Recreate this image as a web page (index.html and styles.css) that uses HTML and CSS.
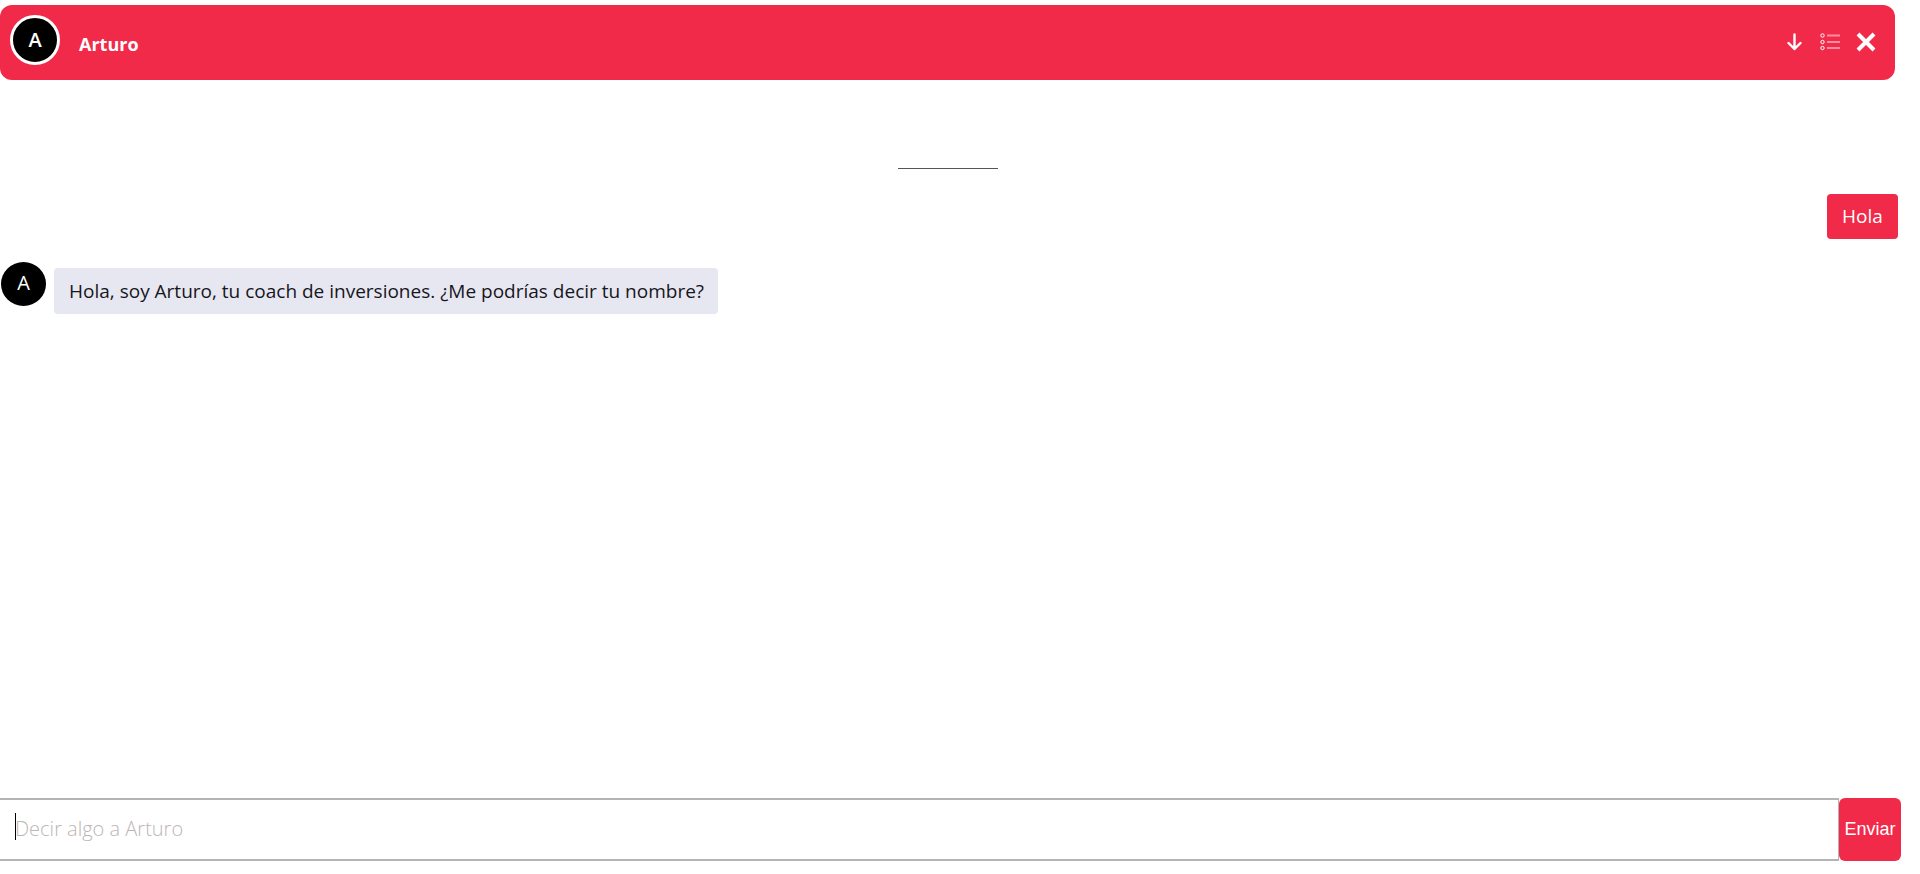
FILE: index.html
```html
<!DOCTYPE html>
<html lang="es">
<head>
<meta charset="utf-8">
<title>Arturo</title>
<link rel="stylesheet" href="styles.css">
</head>
<body>
<div class="page">
  <header class="chat-header">
    <div class="avatar avatar-large">A</div>
    <div class="name">Arturo</div>
    <div class="actions">
      <svg class="icon-arrow" width="15" height="18" viewBox="0 0 15 18" fill="none" stroke="#fff" stroke-width="2.4" stroke-linecap="round" stroke-linejoin="round"><path d="M7.5 1.5v14.5M1.5 10l6 6 6-6"/></svg>
      <svg class="icon-list" width="20" height="18" viewBox="0 0 20 18" fill="none"><g stroke="#fff" stroke-width="1"><circle cx="2.5" cy="2.5" r="1.7"/><circle cx="2.5" cy="9" r="1.7"/><circle cx="2.5" cy="15" r="1.7"/></g><g stroke="#ff8fa0" stroke-width="2"><path d="M7 2.5h13M7 9h13M7 15h13"/></g></svg>
      <svg class="icon-close" width="20" height="20" viewBox="0 0 20 20" fill="none" stroke="#fff" stroke-width="4"><path d="M2 2l16 16M18 2L2 18"/></svg>
    </div>
  </header>
  <main class="messages">
    <div class="separator"></div>
    <div class="row-out"><div class="bubble bubble-out">Hola</div></div>
    <div class="row-in">
      <div class="avatar avatar-small">A</div>
      <div class="bubble bubble-in">Hola, soy Arturo, tu coach de inversiones. ¿Me podrías decir tu nombre?</div>
    </div>
  </main>
  <form class="composer">
    <div class="input-wrap">
      <span class="caret"></span>
      <input class="text-input" type="text" placeholder="Decir algo a Arturo">
    </div>
    <button class="send" type="button">Enviar</button>
  </form>
</div>
</body>
</html>
```

FILE: styles.css
```css
* { box-sizing: border-box; }
html, body { margin: 0; height: 100%; background: #fff; overflow: hidden; }
body { font-family: "Open Sans", "Noto Sans", sans-serif; color: #16161d; }
.page { height: 874px; display: flex; flex-direction: column; padding-top: 5px; }

.chat-header {
  width: 1895px; height: 75px; background: #f12a49; border-radius: 12px;
  display: flex; align-items: center; padding: 0 19px 0 10px; color: #fff;
}
.avatar {
  background: #000; color: #fff; border-radius: 50%;
  display: flex; align-items: center; justify-content: center; flex: none;
}
.avatar-large {
  width: 50px; height: 50px; border: 3px solid #fff; margin-bottom: 5px;
  font-size: 20px; font-weight: 600; padding-bottom: 2px;
}
.name { margin-left: 19px; font-size: 18px; font-weight: 700; line-height: 24px; padding-top: 3px; }
.actions { margin-left: auto; display: flex; align-items: center; gap: 18px; padding-bottom: 2px; }
.icon-close { margin-left: -2px; }

.messages { flex: 1; min-height: 0; display: flex; flex-direction: column; }
.separator { width: 100px; height: 1px; background: #555; margin: 88px 0 0 898px; }
.bubble { border-radius: 4px; font-size: 19px; line-height: 26px; }
.row-out { display: flex; justify-content: flex-end; padding: 25px 22px 0 0; }
.bubble-out { background: #f12a49; color: #fff; width: 71px; height: 45px; padding: 9px 0 0; text-align: center; }
.row-in { display: flex; align-items: flex-start; padding: 23px 0 0 1px; }
.avatar-small { width: 45px; height: 44px; font-size: 20px; padding-bottom: 3px; }
.bubble-in { margin: 6px 0 0 8px; background: #e7e7f1; width: 664px; height: 46px; padding: 10px 0 0 15px; white-space: nowrap; }

.composer { display: flex; width: 1901px; height: 63px; margin-bottom: 13px; }
.input-wrap { position: relative; flex: 1; }
.text-input {
  display: block; width: 100%; height: 63px; border: 0; outline: 0;
  border-top: 2px solid #b4b4b4; border-bottom: 2px solid #b4b4b4; border-right: 1px solid #b4b4b4;
  padding: 0 0 2px 15px; font: 300 20px "Open Sans", sans-serif; background: #fff;
}
.text-input::placeholder { color: #bdb6b6; opacity: 1; }
.caret { position: absolute; left: 15px; top: 15px; width: 1px; height: 27px; background: #000; }
.send {
  width: 62px; height: 63px; border: 0; border-radius: 6px; background: #f12a49; color: #fff;
  font: 18px "Liberation Sans", Arial, sans-serif; padding: 0;
}
```
